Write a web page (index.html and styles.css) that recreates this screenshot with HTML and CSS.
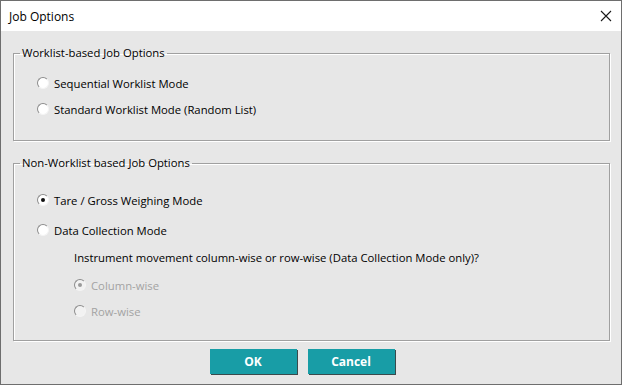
FILE: index.html
```html
<!DOCTYPE html>
<html>
<head>
<meta charset="utf-8">
<link rel="stylesheet" href="styles.css">
</head>
<body>
<div class="window">
  <div class="titlebar">
    <span class="title">Job Options</span>
    <span class="close"><svg width="12" height="12" viewBox="0 0 12 12"><path d="M1 1L11 11M11 1L1 11" stroke="#1a1a1a" stroke-width="1.1" fill="none"/></svg></span>
  </div>
  <div class="client">
    <fieldset class="group g1">
      <legend>Worklist-based Job Options</legend>
      <div class="body">
        <div class="opt r1"><span class="radio"></span><span>Sequential Worklist Mode</span></div>
        <div class="opt r2"><span class="radio"></span><span>Standard Worklist Mode (Random List)</span></div>
      </div>
    </fieldset>
    <fieldset class="group g2">
      <legend>Non-Worklist based Job Options</legend>
      <div class="body">
        <div class="opt t1"><span class="radio checked"></span><span>Tare / Gross Weighing Mode</span></div>
        <div class="opt t2"><span class="radio"></span><span>Data Collection Mode</span></div>
        <div class="sub">
          <div class="question">Instrument movement column-wise or row-wise (Data Collection Mode only)?</div>
          <div class="opt disabled t4"><span class="radio checked"></span><span>Column-wise</span></div>
          <div class="opt disabled t5"><span class="radio"></span><span>Row-wise</span></div>
        </div>
      </div>
    </fieldset>
    <div class="buttons">
      <button class="btn">OK</button>
      <button class="btn">Cancel</button>
    </div>
  </div>
</div>
</body>
</html>
```
FILE: styles.css
```css
* { box-sizing: border-box; }
html, body { margin: 0; padding: 0; }
body {
  width: 622px;
  height: 385px;
  overflow: hidden;
  font-family: "Open Sans", "Noto Sans", sans-serif;
  font-size: 11.3px;
  color: #000;
}
.window {
  width: 622px;
  height: 385px;
  border: 1px solid #6e6e6e;
  display: flex;
  flex-direction: column;
  background: #e7e7e7;
}
.titlebar {
  height: 30px;
  background: #fff;
  display: flex;
  align-items: center;
  justify-content: space-between;
  padding: 0 9px 0 8px;
}
.title { font-size: 12px; }
.close { display: flex; width: 12px; height: 12px; }
.client {
  flex: 1;
  padding: 14px 11px 0 12px;
  display: flex;
  flex-direction: column;
}
.group {
  margin: 0;
  padding: 0;
  border: 1px solid #a0a0a0;
  box-shadow: inset 1px 1px 0 #fff, 1px 1px 0 #fff;
  min-width: 0;
}
.group legend {
  margin-left: 6px;
  padding: 0 2px;
  font-size: 11.3px;
  line-height: 16px;
}
.body { padding-left: 23px; }
.g1 .body { padding-top: 12px; padding-bottom: 21px; }
.g2 { margin-top: 14px; }
.g2 .body { padding-top: 19px; padding-bottom: 19px; }
.opt {
  display: flex;
  align-items: center;
  height: 20px;
  gap: 5px;
}
.r2 { margin-top: 6px; }
.t2 { margin-top: 10px; }
.sub { padding-left: 37px; }
.question { height: 20px; line-height: 20px; margin-top: 8px; }
.t4 { margin-top: 7px; }
.t5 { margin-top: 6px; }
.radio {
  position: relative;
  width: 12px;
  height: 12px;
  border-radius: 50%;
  background: #fff;
  border: 1px solid;
  border-color: #8c8c8c #f4f4f4 #f4f4f4 #8c8c8c;
  flex: none;
}
.radio.checked::after {
  content: "";
  position: absolute;
  left: 3px;
  top: 3px;
  width: 4px;
  height: 4px;
  border-radius: 50%;
  background: #111;
}
.disabled { color: #a3a3a3; }
.disabled .radio { background: #f2f2f2; }
.disabled .radio.checked::after { background: #9a9a9a; }
.buttons {
  display: flex;
  justify-content: center;
  gap: 11px;
  margin-top: 8px;
  padding-right: 19px;
}
.btn {
  width: 87px;
  height: 25px;
  background: #189da6;
  color: #fff;
  font-family: "Open Sans", "Noto Sans", sans-serif;
  font-weight: bold;
  font-size: 12px;
  border: none;
  box-shadow: 1px 1px 0 #3a4a4c;
  padding: 0;
}
```
